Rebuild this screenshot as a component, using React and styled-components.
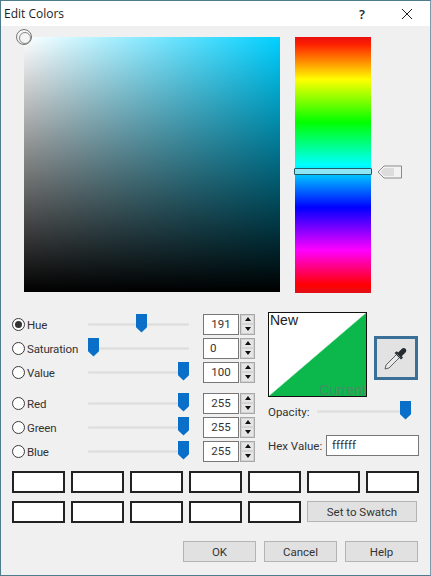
import React from 'react';
import styled, { createGlobalStyle } from 'styled-components';

const GlobalStyle = createGlobalStyle`
  html, body {
    margin: 0;
    padding: 0;
    background: #f0f0f0;
  }
  * {
    box-sizing: border-box;
  }
`;

const channels = [
  [
    { name: 'Hue', value: '191', pos: 48, checked: true },
    { name: 'Saturation', value: '0', pos: 0, left: true },
    { name: 'Value', value: '100', pos: 90 },
  ],
  [
    { name: 'Red', value: '255', pos: 90 },
    { name: 'Green', value: '255', pos: 90 },
    { name: 'Blue', value: '255', pos: 90 },
  ],
];

const Slider = ({ pos, width }) => (
  <Track $width={width}>
    <Thumb $pos={pos} />
  </Track>
);

const SpinBox = ({ value, left }) => (
  <Spin>
    <SpinInput $left={left}>{value}</SpinInput>
    <SpinButtons>
      <SpinButton><UpArrow /></SpinButton>
      <SpinButton><DownArrow /></SpinButton>
    </SpinButtons>
  </Spin>
);

const Eyedropper = () => (
  <svg width="26" height="26" viewBox="0 0 26 26">
    <path d="M2 24l1-4L13.500 9.500l3 3L6 23z" fill="#e8e8e8" stroke="#5f6266" strokeWidth="1" />
    <path d="M11.500 8l6.500 6.500 2-2-1.300-1.300 3.800-3.800c1-1 1-2.600 0-3.600s-2.600-1-3.600 0l-3.800 3.800-1.300-1.300z" fill="#262b2f" />
    <path d="M13.500 8.500l4 4" stroke="#66777e" strokeWidth="1" />
  </svg>
);

const App = () => {
  return (
    <Window>
      <GlobalStyle />
      <TitleBar>
        <Title>Edit Colors</Title>
        <Help>?</Help>
        <Close>
          <svg width="12" height="12" viewBox="0 0 12 12">
            <path d="M1 1l10 10M11 1L1 11" stroke="#222" strokeWidth="1" fill="none" />
          </svg>
        </Close>
      </TitleBar>
      <Body>
        <Picker>
          <Field>
            <Marker />
          </Field>
          <HueColumn>
            <HueBar>
              <HueHandle />
            </HueBar>
            <HueArrow>
              <svg width="26" height="14" viewBox="0 0 26 14">
                <path d="M1 7l6-6h17.500v12H7z" fill="#f2f2f2" stroke="#8a8a8a" strokeWidth="1" />
                <path d="M7 3h10v8H7L3.500 7z" fill="#dcdcdc" />
              </svg>
            </HueArrow>
          </HueColumn>
        </Picker>
        <Controls>
          <Channels>
            {channels.map((group, i) => (
              <Group key={i}>
                {group.map((c) => (
                  <Row key={c.name}>
                    <Radio $checked={c.checked} />
                    <RadioLabel>{c.name}</RadioLabel>
                    <Slider pos={c.pos} width={101} />
                    <SpinBox value={c.value} left={c.left} />
                  </Row>
                ))}
              </Group>
            ))}
          </Channels>
          <Side>
            <PreviewRow>
              <Preview>
                <NewLabel>New</NewLabel>
                <CurrentLabel>Current</CurrentLabel>
              </Preview>
              <DropperButton>
                <Eyedropper />
              </DropperButton>
            </PreviewRow>
            <OpacityRow>
              <SideLabel>Opacity:</SideLabel>
              <Slider pos={83} width={95} />
            </OpacityRow>
            <HexRow>
              <SideLabel>Hex Value:</SideLabel>
              <HexInput>ffffff</HexInput>
            </HexRow>
          </Side>
        </Controls>
        <Swatches>
          {Array.from({ length: 12 }).map((_, i) => (
            <Swatch key={i} />
          ))}
          <SwatchButton>Set to Swatch</SwatchButton>
        </Swatches>
        <Footer>
          <DialogButton>OK</DialogButton>
          <DialogButton>Cancel</DialogButton>
          <DialogButton>Help</DialogButton>
        </Footer>
      </Body>
    </Window>
  );
};

const Window = styled.div`
  width: 431px;
  height: 576px;
  display: flex;
  flex-direction: column;
  border: 1px solid #4e7b8e;
  border-right-color: #7c9aa8;
  background: #f0f0f0;
  overflow: hidden;
  font-family: Roboto, "Open Sans", sans-serif;
  font-size: 11.5px;
  color: #333;
`;

const TitleBar = styled.div`
  height: 25px;
  flex: none;
  display: flex;
  align-items: center;
  background: #fff;
  padding-left: 3px;
`;

const Title = styled.div`
  font-family: "Open Sans", sans-serif;
  font-size: 12px;
  color: #1c1c1c;
  flex: 1;
`;

const Help = styled.div`
  width: 12px;
  font-family: "Open Sans", sans-serif;
  font-size: 13px;
  font-weight: 600;
  text-align: center;
  color: #222;
  margin-right: 33px;
`;

const Close = styled.div`
  width: 12px;
  height: 12px;
  display: flex;
  margin-right: 17px;
`;

const Body = styled.div`
  flex: 1;
  display: flex;
  flex-direction: column;
`;

const Picker = styled.div`
  display: flex;
  gap: 15px;
  padding: 11px 0 0 23px;
  height: 286px;
`;

const Field = styled.div`
  position: relative;
  width: 256px;
  height: 255px;
  background:
    linear-gradient(to top, #000, rgba(0, 0, 0, 0)),
    linear-gradient(to right, #fff, hsl(191, 100%, 50%));
`;

const Marker = styled.div`
  position: absolute;
  left: -8px;
  top: -8px;
  width: 16px;
  height: 16px;
  border-radius: 50%;
  border: 1px solid #777;
  background: #f4f4f4;
  &::after {
    content: "";
    display: block;
    margin: 2px;
    width: 10px;
    height: 10px;
    border-radius: 50%;
    border: 1px solid #888;
  }
`;

const HueColumn = styled.div`
  display: flex;
  gap: 6px;
`;

const HueBar = styled.div`
  position: relative;
  width: 76px;
  height: 256px;
  background: linear-gradient(
    to bottom,
    #e80f0f 0%,
    #ff2200 3%,
    #ffff00 16.67%,
    #00ff00 33.33%,
    #00ffff 50%,
    #0000ff 66.67%,
    #ff00ff 83.33%,
    #ff0000 97%,
    #e0101a 100%
  );
`;

const HueHandle = styled.div`
  position: absolute;
  left: -1px;
  right: -1px;
  top: 131px;
  height: 7px;
  border: 1px solid #1f5a68;
  border-radius: 1px;
  background: #8fe6f5;
`;

const HueArrow = styled.div`
  position: relative;
  top: 128px;
  width: 26px;
  height: 14px;
`;

const Controls = styled.div`
  display: flex;
  height: 152px;
  padding-left: 11px;
`;

const Channels = styled.div`
  width: 256px;
  display: flex;
  flex-direction: column;
  gap: 7px;
`;

const Group = styled.div`
  display: flex;
  flex-direction: column;
`;

const Row = styled.div`
  height: 24px;
  display: flex;
  align-items: center;
`;

const Radio = styled.div`
  width: 13px;
  height: 13px;
  flex: none;
  border-radius: 50%;
  border: 1px solid #3a3a3a;
  background: #fff;
  display: flex;
  align-items: center;
  justify-content: center;
  margin-right: 2px;
  &::after {
    content: "";
    display: ${(p) => (p.$checked ? 'block' : 'none')};
    width: 7px;
    height: 7px;
    border-radius: 50%;
    background: #333;
  }
`;

const RadioLabel = styled.div`
  width: 61px;
  flex: none;
  padding-top: 2px;
  white-space: nowrap;
  letter-spacing: -0.15px;
`;

const Track = styled.div`
  position: relative;
  width: ${(p) => p.$width}px;
  height: 3px;
  flex: none;
  background: #dedede;
  border: 1px solid #e4e4e4;
`;

const Thumb = styled.div`
  position: absolute;
  left: ${(p) => p.$pos - 1}px;
  top: -10px;
  width: 11px;
  height: 19px;
  background: #0a6fc9;
  clip-path: polygon(0 0, 100% 0, 100% 72%, 50% 100%, 0 72%);
`;

const Spin = styled.div`
  display: flex;
  margin-left: 14px;
  gap: 1px;
`;

const SpinInput = styled.div`
  width: 36px;
  height: 21px;
  background: #fff;
  border: 1px solid #777;
  line-height: 18px;
  padding-left: ${(p) => (p.$left ? '6px' : '0')};
  text-align: ${(p) => (p.$left ? 'left' : 'center')};
`;

const SpinButtons = styled.div`
  width: 15px;
  height: 21px;
  display: flex;
  flex-direction: column;
  border: 1px solid #a8a8a8;
  background: #f0f0f0;
`;

const SpinButton = styled.div`
  flex: 1;
  display: flex;
  align-items: center;
  justify-content: center;
  border: 1px solid #d4d4d4;
  background: #e6e6e6;
`;

const UpArrow = styled.div`
  width: 0;
  height: 0;
  border-left: 3.5px solid transparent;
  border-right: 3.5px solid transparent;
  border-bottom: 4px solid #111;
`;

const DownArrow = styled.div`
  width: 0;
  height: 0;
  border-left: 3.5px solid transparent;
  border-right: 3.5px solid transparent;
  border-top: 4px solid #111;
`;

const Side = styled.div`
  width: 151px;
  display: flex;
  flex-direction: column;
`;

const PreviewRow = styled.div`
  display: flex;
  align-items: flex-end;
  gap: 7px;
`;

const Preview = styled.div`
  position: relative;
  width: 99px;
  height: 85px;
  border: 1.5px solid #111;
  background: linear-gradient(to bottom right, #fff 49.5%, #0cb84c 50.5%);
`;

const NewLabel = styled.span`
  position: absolute;
  left: 1px;
  top: -1px;
  font-family: "Liberation Sans", sans-serif;
  font-size: 14px;
  color: #222;
`;

const CurrentLabel = styled.span`
  position: absolute;
  right: 0;
  bottom: -2px;
  font-family: "Liberation Sans", sans-serif;
  font-size: 14px;
  color: #4c8a66;
`;

const DropperButton = styled.div`
  width: 44px;
  height: 44px;
  margin-bottom: 17px;
  border: 3px solid #3a6f97;
  background: #e2e2e2;
  display: flex;
  align-items: center;
  justify-content: center;
`;

const OpacityRow = styled.div`
  display: flex;
  align-items: center;
  justify-content: space-between;
  height: 28px;
  padding-right: 7px;
`;

const SideLabel = styled.div`
  white-space: nowrap;
  padding-top: 1px;
`;

const HexRow = styled.div`
  display: flex;
  align-items: center;
  justify-content: space-between;
  margin-top: 10px;
`;

const HexInput = styled.div`
  width: 93px;
  height: 21px;
  background: #fff;
  border: 1px solid #777;
  padding-left: 5px;
  line-height: 18px;
`;

const Swatches = styled.div`
  display: grid;
  grid-template-columns: repeat(7, 53px);
  grid-auto-rows: 22px;
  column-gap: 6px;
  row-gap: 8px;
  padding: 0 0 0 11px;
  margin-top: 7px;
`;

const Swatch = styled.div`
  background: #fff;
  border: 2px solid #222;
`;

const DialogButton = styled.div`
  width: 73px;
  height: 21px;
  display: flex;
  align-items: center;
  justify-content: center;
  background: #e1e1e1;
  border: 1px solid #b4b4b4;
`;

const SwatchButton = styled(DialogButton)`
  grid-column: span 2;
  width: 110px;
`;

const Footer = styled.div`
  display: flex;
  justify-content: flex-end;
  gap: 8px;
  padding-right: 12px;
  margin-top: 18px;
`;

export default App;
